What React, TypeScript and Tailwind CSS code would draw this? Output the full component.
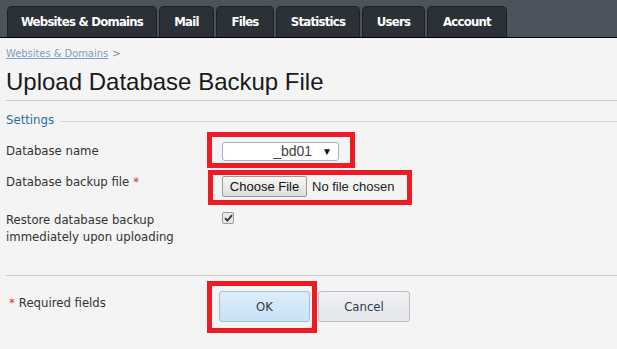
import React from "react";

const tabs = [
  { label: "Websites & Domains", w: "w-[150px]" },
  { label: "Mail", w: "w-[55px]" },
  { label: "Files", w: "w-[58px]" },
  { label: "Statistics", w: "w-[84px]" },
  { label: "Users", w: "w-[63px]" },
  { label: "Account", w: "w-[80px]" },
];

// red annotation frame drawn over a control
function Mark({ className }: { className: string }) {
  return <div className={`pointer-events-none absolute border-[5px] border-[#ed1c24] ${className}`} />;
}

export default function App() {
  return (
    <div className="min-h-[349px] w-[617px] overflow-hidden bg-[#f4f4f4] font-['DejaVu_Sans',sans-serif] font-stretch-condensed text-[#333]">
      {/* top navigation */}
      <div className="flex h-[38px] items-end gap-[2px] border-b border-black bg-[#4b535c] pl-[7px]">
        {tabs.map((t) => (
          <div
            key={t.label}
            className={`${t.w} flex h-[31px] items-center justify-center rounded-t-[5px] border border-b-0 border-[#1c2025] bg-[#2c3137] text-[13px] font-bold tracking-[-0.75px] text-white`}
          >
            {t.label}
          </div>
        ))}
      </div>

      <div className="pl-[6px]">
        <div className="mt-[9px] text-[11px] leading-[14px]">
          <span className="text-[#7c9dc1] underline">Websites &amp; Domains</span>
          <span className="ml-[4px] text-[#888]">&gt;</span>
        </div>
        <h1 className="mt-[7px] font-['Liberation_Sans',Arial,sans-serif] font-stretch-normal text-[24px] leading-[28px] text-[#1a1a1a]">
          Upload Database Backup File
        </h1>
        <div className="mt-[4px] border-t border-[#cbcbcb]" />

        <div className="mt-[11px] flex items-center">
          <span className="text-[13px] leading-[16px] text-[#2c6ca5]">Settings</span>
          <div className="ml-[6px] mt-[3px] h-px flex-1 bg-[#d4d8de]" />
        </div>

        <div className="mt-[10px] grid grid-cols-[216px_1fr] text-[13px] leading-[17px]">
          {/* database name */}
          <div className="flex h-[24px] items-center">Database name</div>
          <div className="flex h-[32px] items-start pt-[4px]">
            <div className="relative flex h-[19px] w-[117px] items-center justify-end rounded-[3px] border border-[#a9b0b8] bg-white pr-[6px] font-['Liberation_Sans',Arial,sans-serif] font-stretch-normal text-[14px] text-[#444]">
              <span>_bd01</span>
              <span className="ml-[10px] text-[10px] text-[#111]">▼</span>
              <Mark className="-bottom-[8px] -left-[16px] -right-[17px] -top-[11px]" />
            </div>
          </div>

          {/* backup file */}
          <div className="flex h-[34px] items-start pt-[3px]">
            Database backup file<span className="ml-[4px] text-[#d33]">*</span>
          </div>
          <div className="flex h-[34px] items-start pt-[6px]">
            <div className="relative flex items-center font-['Liberation_Sans',Arial,sans-serif] font-stretch-normal text-[13px]">
              <div className="flex h-[21px] w-[85px] items-center justify-center rounded-[2px] border border-[#9a9a9a] bg-gradient-to-b from-[#f6f6f6] to-[#dedede] text-[#111]">
                Choose File
              </div>
              <span className="ml-[5px] text-[#222]">No file chosen</span>
              <Mark className="-bottom-[8px] -left-[14px] -right-[18px] -top-[6px]" />
            </div>
          </div>

          {/* restore */}
          <div className="pt-[7px] leading-[17px]">
            Restore database backup
            <br />
            immediately upon uploading
          </div>
          <div className="pt-[8px]">
            <div className="flex h-[12px] w-[12px] items-center justify-center rounded-[2px] border border-[#9c9c9c] bg-[#e8e8e8]">
              <svg width="9" height="8" viewBox="0 0 9 8">
                <path d="M1 4.2 L3.4 6.6 L8 1.2" fill="none" stroke="#333" strokeWidth="1.8" />
              </svg>
            </div>
          </div>
        </div>

        <div className="mt-[30px] border-t border-[#c8c8c8]" />

        <div className="mt-[15px] grid grid-cols-[213px_1fr] text-[13px]">
          <div className="flex h-[31px] items-start pl-[3px] pt-[2px]">
            <span className="mr-[4px] text-[#d33]">*</span>Required fields
          </div>
          <div className="flex items-center gap-[8px]">
            <div className="relative">
              <button className="h-[31px] w-[91px] rounded-[3px] border border-[#a7bfd5] bg-gradient-to-b from-[#deedfa] to-[#c9e1f6] text-[13px] text-[#2d3b4a]">
                OK
              </button>
              <Mark className="-bottom-[11px] -left-[12px] -right-[7px] -top-[10px]" />
            </div>
            <button className="h-[31px] w-[92px] rounded-[3px] border border-[#babfc6] bg-gradient-to-b from-[#f0f1f3] to-[#e3e6ea] text-[13px] text-[#2d3b4a]">
              Cancel
            </button>
          </div>
        </div>
      </div>
    </div>
  );
}
